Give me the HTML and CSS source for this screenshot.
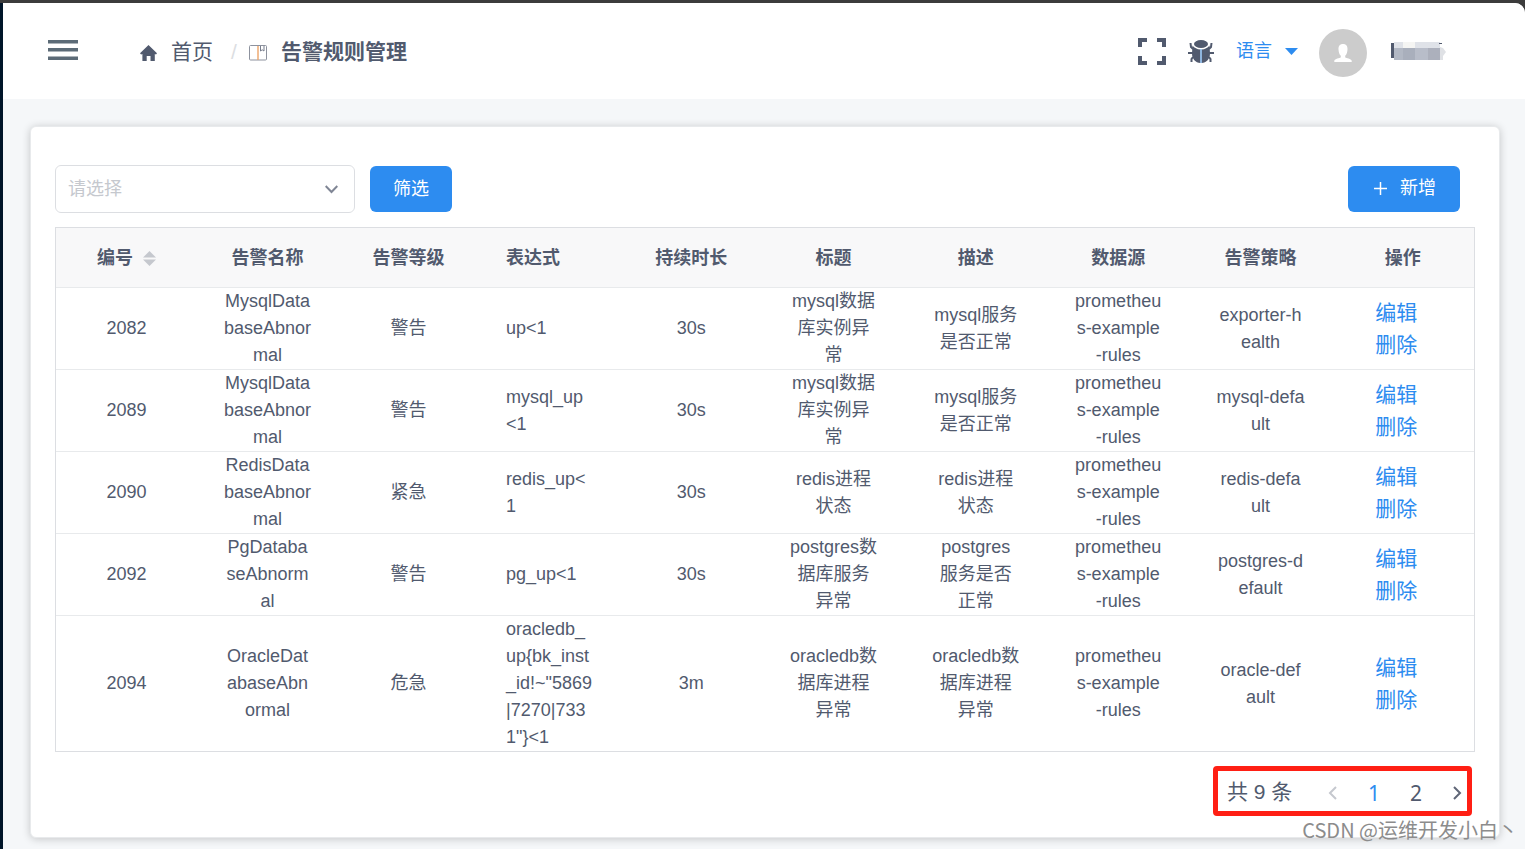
FILE: index.html
```html
<!DOCTYPE html>
<html lang="zh-CN">
<head>
<meta charset="utf-8">
<title>告警规则管理</title>
<link rel="stylesheet" href="styles.css">
</head>
<body>
<div class="app">
  <header class="topbar">
    <button class="icon-btn menu-btn" type="button" aria-label="菜单">
      <svg width="30" height="20" viewBox="0 0 30 20" fill="#5c6b77"><path d="M0 0h30v3.5H0zM0 8h30v3.5H0zM0 16.5h30V20H0z"/></svg>
    </button>
    <nav class="crumbs" aria-label="面包屑">
      <a class="crumb" href="#">
        <svg width="17" height="16" viewBox="0 0 17 16" fill="#515a6e"><path d="M8.500 0L17 8.200l-1 1.200-1.200-.5V16h-4.300v-5H6.700v5H2.400V8.900l-1.300.5-1.100-1.200z"/></svg>
        <span>首页</span>
      </a>
      <span class="slash">/</span>
      <span class="crumb current">
        <svg width="18" height="16" viewBox="0 0 18 16" fill="none"><rect x=".5" y=".5" width="17" height="14.500" rx="1" stroke="#8d929e"/><path d="M9 1v14" stroke="#eda468" stroke-width="1.400"/><path d="M11.500 1v5l1.700-1.200L15 6V1" stroke="#777d8c"/></svg>
        <span>告警规则管理</span>
      </span>
    </nav>
    <div class="tools">
      <button class="icon-btn" type="button" aria-label="全屏">
        <svg width="28" height="27" viewBox="0 0 28 27" fill="none" stroke="#515a6e" stroke-width="4"><path d="M2 9V2h7M19 2h7v7M26 18v7h-7M9 25H2v-7"/></svg>
      </button>
      <button class="icon-btn bug-btn" type="button" aria-label="错误日志">
        <svg width="26" height="24" viewBox="0 0 26 24"><g fill="none" stroke="#515a6e" stroke-width="2"><path d="M5 10L3 8 2.500 4M21 10l2-2 .500-4M5 14H0M21 14H26M5 18L3.500 20 3.500 23M21 18l1.500 2v3"/></g><ellipse cx="13" cy="5" rx="7" ry="4" fill="#515a6e"/><path fill="#515a6e" d="M4.500 6.500C6.500 9 9 10.300 12.400 10.500V24C7.500 23.700 4 20 4 14.500zM21.500 6.500c-2 2.500-4.500 3.800-7.900 4V24c4.900-.300 8.400-4 8.400-9.500z"/><path stroke="#65aef7" d="M13 10v14"/></svg>
      </button>
      <button class="icon-btn lang" type="button">
        <span>语言</span>
        <svg width="13" height="7" viewBox="0 0 13 7" fill="#2d8cf0"><path d="M0 0h13L6.500 7z"/></svg>
      </button>
      <span class="avatar">
        <svg width="18" height="18" viewBox="0 0 18 18" fill="#fff"><path d="M9 0c3.200 0 4.700 2.200 4.500 5.500-.2 3-.9 5-2.300 6.300v1.500c1 1.200 6 1.200 6.500 3.500V18H.3v-1.200c.5-2.300 5.500-2.300 6.500-3.500v-1.500C5.400 10.500 4.700 8.500 4.500 5.500 4.300 2.200 5.800 0 9 0z"/></svg>
      </span>
      <svg class="user-name" width="55" height="18" viewBox="0 0 55 18" role="img" aria-label="用户"><path fill="#515a6e" d="M0 1h3v15H0z"/><path fill="#dfe2e8" d="M3 0h9v6H3zM24 0h25v6H24z"/><path fill="#f5f5f3" d="M12 0h12v6H12z"/><path fill="#b2b8c4" d="M3 6h9v12H3z"/><path fill="#a9afbc" d="M12 6h12v12H12z"/><path fill="#b8bdc9" d="M24 6h13v12H24z"/><path fill="#acb0bc" d="M37 6h12v12H37z"/><path fill="#dfe1e5" d="M49 5l3 1 3 4-3 4v4h-3z"/><path fill="#515a6e" d="M48 1h3v1h-3z"/></svg>
    </div>
  </header>

  <main class="card">
    <form class="filters">
      <div class="select-wrap">
        <select class="select" aria-label="请选择"><option>请选择</option></select>
        <svg class="chevron" width="13" height="9" viewBox="0 0 13 9" fill="none" stroke="#808695" stroke-width="2"><path d="M.7 1l5.800 6 5.800-6"/></svg>
      </div>
      <button class="btn" type="button">筛选</button>
      <button class="btn add" type="button">
        <svg width="13" height="13" viewBox="0 0 13 13" stroke="#fff" stroke-width="1.500"><path d="M6.500 0v13M0 6.500h13"/></svg>
        <span>新增</span>
      </button>
    </form>

    <table class="rules">
      <colgroup><col class="narrow"><col class="narrow"><col class="narrow"><col class="narrow"><col><col><col><col><col><col></colgroup>
      <thead>
        <tr>
          <th><span class="sortable">编号 <svg width="13" height="15" viewBox="0 0 13 15" fill="#c5c8ce"><path d="M6.500 0L13 6.500H0zM0 8.500h13L6.500 15z"/></svg></span></th>
          <th>告警名称</th><th>告警等级</th><th class="left">表达式</th><th>持续时长</th><th>标题</th><th>描述</th><th>数据源</th><th>告警策略</th><th>操作</th>
        </tr>
      </thead>
      <tbody>
        <tr><td>2082</td><td class="name">MysqlDatabaseAbnormal</td><td>警告</td><td class="left">up&lt;1</td><td>30s</td><td>mysql数据库实例异常</td><td>mysql服务是否正常</td><td>prometheus-example-rules</td><td>exporter-health</td><td class="ops"><a href="#">编辑</a><a href="#">删除</a></td></tr>
        <tr><td>2089</td><td class="name">MysqlDatabaseAbnormal</td><td>警告</td><td class="left">mysql_up&lt;1</td><td>30s</td><td>mysql数据库实例异常</td><td>mysql服务是否正常</td><td>prometheus-example-rules</td><td>mysql-default</td><td class="ops"><a href="#">编辑</a><a href="#">删除</a></td></tr>
        <tr><td>2090</td><td class="name">RedisDatabaseAbnormal</td><td>紧急</td><td class="left">redis_up&lt;1</td><td>30s</td><td>redis进程状态</td><td>redis进程状态</td><td>prometheus-example-rules</td><td>redis-default</td><td class="ops"><a href="#">编辑</a><a href="#">删除</a></td></tr>
        <tr><td>2092</td><td class="name">PgDatabaseAbnormal</td><td>警告</td><td class="left">pg_up&lt;1</td><td>30s</td><td>postgres数据库服务异常</td><td>postgres 服务是否正常</td><td>prometheus-example-rules</td><td>postgres-default</td><td class="ops"><a href="#">编辑</a><a href="#">删除</a></td></tr>
        <tr><td>2094</td><td class="name">OracleDatabaseAbnormal</td><td>危急</td><td class="left">oracledb_up{bk_inst_id!~"5869|7270|7331"}&lt;1</td><td>3m</td><td>oracledb数据库进程异常</td><td>oracledb数据库进程异常</td><td>prometheus-example-rules</td><td>oracle-default</td><td class="ops"><a href="#">编辑</a><a href="#">删除</a></td></tr>
      </tbody>
    </table>

    <nav class="pager" aria-label="分页">
      <span class="total">共 9 条</span>
      <button class="page" type="button" aria-label="上一页" disabled><svg width="9" height="14" viewBox="0 0 9 14" fill="none" stroke="#c5c8ce" stroke-width="2"><path d="M8 1L2 7l6 6"/></svg></button>
      <button class="page active" type="button">1</button>
      <button class="page" type="button">2</button>
      <button class="page" type="button" aria-label="下一页"><svg width="9" height="14" viewBox="0 0 9 14" fill="none" stroke="#5f6677" stroke-width="2"><path d="M1 1l6 6-6 6"/></svg></button>
    </nav>
  </main>
  <div class="watermark">CSDN @运维开发小白丶</div>
</div>
</body>
</html>
```

FILE: styles.css
```css
* {
  box-sizing: border-box;
}

body {
  margin: 0;
  background: #3c3c3c;
  color: #515a6e;
  font-family: "Liberation Sans", "Noto Sans CJK SC", sans-serif;
  font-size: 18px;
  line-height: 27px;
}

a {
  text-decoration: none;
}

svg {
  display: block;
  flex: none;
}

.app {
  position: relative;
  min-height: calc(100vh - 3px);
  margin-top: 3px;
  padding-bottom: 12px;
  border-left: 3px solid #001529;
  border-top-right-radius: 10px;
  background: #f5f7f9;
  overflow: hidden;
}

.topbar {
  display: flex;
  align-items: center;
  height: 96px;
  padding: 0 79px 0 45px;
  background: #fff;
}

.icon-btn {
  padding: 0;
  border: 0;
  background: none;
  font: inherit;
  cursor: pointer;
}

.menu-btn {
  padding-bottom: 2px;
}

.crumbs {
  display: flex;
  align-items: center;
  margin-left: 62px;
  font-size: 21px;
}

.crumb {
  display: flex;
  align-items: center;
  gap: 14px;
  color: #515a6e;
}

.crumb svg {
  margin-top: 3px;
}

.current {
  font-weight: 700;
}

.slash {
  width: 36px;
  padding-left: 18px;
  color: #dcdee2;
}

.tools {
  display: flex;
  align-items: center;
  margin-left: auto;
}

.bug-btn {
  margin-left: 22px;
}

.lang {
  display: flex;
  align-items: center;
  gap: 13px;
  margin: 0 21px 0 22px;
  color: #2d8cf0;
}

.avatar {
  display: flex;
  align-items: center;
  justify-content: center;
  width: 48px;
  height: 48px;
  margin: 4px 24px 0 0;
  border-radius: 50%;
  background: #ccc;
}

.card {
  margin: 27px 25px 0 27px;
  padding: 38px 24px 21px;
  border: 1px solid #e8eaec;
  border-radius: 6px;
  background: #fff;
  box-shadow: 0 1px 9px rgba(0, 0, 0, 0.2);
}

.filters {
  display: flex;
  align-items: center;
  gap: 15px;
  margin-bottom: 14px;
}

.select-wrap {
  position: relative;
  width: 300px;
}

.select {
  display: block;
  width: 100%;
  height: 48px;
  padding: 0 36px 0 12px;
  border: 1px solid #dcdee2;
  border-radius: 6px;
  appearance: none;
  background: #fff;
  color: #c5c8ce;
  font: inherit;
}

.chevron {
  position: absolute;
  top: 20px;
  right: 17px;
  pointer-events: none;
}

.btn {
  display: flex;
  align-items: center;
  height: 46px;
  padding: 0 23px;
  border: 0;
  border-radius: 6px;
  background: #2d8cf0;
  color: #fff;
  font: inherit;
}

.add {
  gap: 13px;
  margin: 0 15px 0 auto;
  padding: 0 24px 2px 26px;
}

.rules {
  width: 100%;
  table-layout: fixed;
  border: 1px solid #dcdee2;
  border-collapse: separate;
  border-spacing: 0;
}

.narrow {
  width: 141px;
}

.rules th,
.rules td {
  padding: 0 27px;
  border-bottom: 1px solid #e8eaec;
  text-align: center;
  word-break: break-all;
}

.rules th {
  height: 60px;
  padding-top: 2px;
  background: #f8f8f9;
}

.rules .name {
  padding: 0 26px;
}

.rules .left {
  text-align: left;
}

.rules tbody tr:last-child td {
  border-bottom: 0;
}

.sortable {
  display: inline-flex;
  align-items: center;
  gap: 10px;
}

.rules .ops {
  font-size: 21px;
  line-height: 32px;
}

.ops a {
  display: block;
  margin-right: 13px;
  color: #2d8cf0;
}

.pager {
  display: flex;
  align-items: center;
  width: 259px;
  height: 50px;
  margin: 14px 3px 0 auto;
  padding: 0 5px 0 9px;
  border: 5px solid #ff1f14;
  border-radius: 4px;
  font-size: 21px;
}

.total {
  margin-right: auto;
}

.page {
  display: flex;
  align-items: center;
  justify-content: center;
  width: 42px;
  padding: 4px 0 0;
  border: 0;
  background: none;
  color: #515a6e;
  font: 21px/27px "Noto Sans", sans-serif;
}

.page:last-child {
  width: 9px;
  margin-left: 16px;
}

.active {
  color: #2d8cf0;
}

.watermark {
  position: absolute;
  right: 7px;
  bottom: 6px;
  color: #8c8c8c;
  font-family: "Noto Sans CJK SC", sans-serif;
  font-size: 20px;
  line-height: 28px;
}
```
